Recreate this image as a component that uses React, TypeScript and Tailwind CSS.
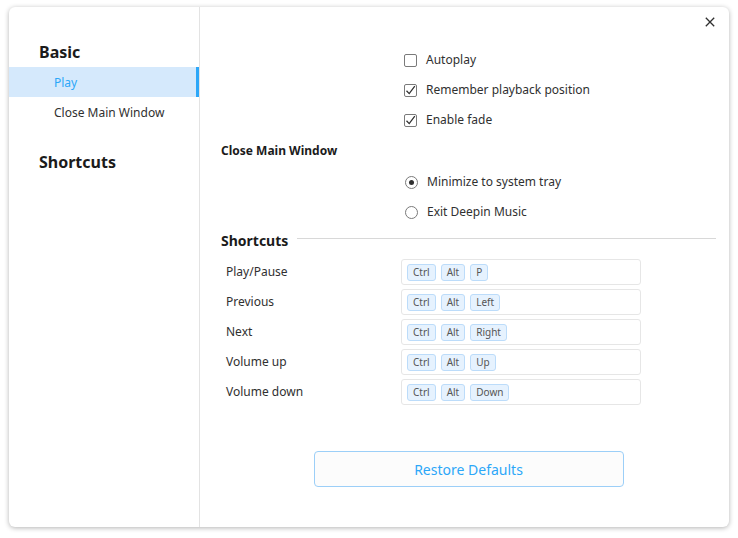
const font = { fontFamily: '"Noto Sans", "Open Sans", sans-serif' }

const shortcuts = [
  { name: "Play/Pause", keys: ["Ctrl", "Alt", "P"] },
  { name: "Previous", keys: ["Ctrl", "Alt", "Left"] },
  { name: "Next", keys: ["Ctrl", "Alt", "Right"] },
  { name: "Volume up", keys: ["Ctrl", "Alt", "Up"] },
  { name: "Volume down", keys: ["Ctrl", "Alt", "Down"] },
]

const CheckBox = ({ checked, label }: { checked: boolean; label: string }) => (
  <div className="flex items-center h-[30px]">
    <span className="w-[13px] h-[13px] rounded-[2px] border border-[#7a7a7a] flex items-center justify-center bg-white">
      {checked && (
        <svg width="11" height="11" viewBox="0 0 11 11" fill="none">
          <path d="M1.5 5.8 L4.2 8.6 L9.8 1.2" stroke="#303030" strokeWidth="1.3" />
        </svg>
      )}
    </span>
    <span className="ml-[9px] text-[12px] text-[#303030]">{label}</span>
  </div>
)

const Radio = ({ checked, label }: { checked: boolean; label: string }) => (
  <div className="flex items-center h-[30px]">
    <span className="w-[13px] h-[13px] rounded-full border border-[#7a7a7a] flex items-center justify-center bg-white">
      {checked && <span className="w-[5px] h-[5px] rounded-full bg-[#303030]" />}
    </span>
    <span className="ml-[9px] text-[12px] text-[#303030]">{label}</span>
  </div>
)

const App = () => {
  return (
    <div className="w-[738px] h-[538px] bg-white pt-[7px] pl-[9px]" style={font}>
      <div className="relative flex w-[720px] h-[520px] bg-white rounded-[6px] shadow-[0_1px_5px_rgba(0,0,0,0.3)] overflow-hidden">
        <svg className="absolute top-[10px] right-[14px]" width="10" height="10" viewBox="0 0 10 10" fill="none">
          <path d="M0.8 0.8 L9.2 9.2 M9.2 0.8 L0.8 9.2" stroke="#303030" strokeWidth="1.3" />
        </svg>

        {/* sidebar */}
        <div className="w-[191px] shrink-0 border-r border-[#e3e3e3] pt-[33px]">
          <div className="h-[24px] leading-[24px] pl-[30px] text-[16px] font-bold text-[#1b1b1b]">Basic</div>
          <div className="mt-[3px] h-[30px] flex items-center pl-[45px] pt-[2px] text-[12px] text-[#2ca7f8] bg-[#d5e9fc] border-r-[3px] border-[#2ca7f8]">
            Play
          </div>
          <div className="h-[30px] flex items-center pl-[45px] pt-[2px] text-[12px] text-[#303030]">Close Main Window</div>
          <div className="mt-[23px] h-[24px] leading-[24px] pl-[30px] text-[16px] font-bold text-[#1b1b1b]">Shortcuts</div>
        </div>

        {/* content */}
        <div className="flex-1 pl-[21px] pr-[13px] pt-[38px]">
          <div className="pl-[183px]">
            <CheckBox checked={false} label="Autoplay" />
            <CheckBox checked label="Remember playback position" />
            <CheckBox checked label="Enable fade" />
          </div>
          <div className="h-[32px] flex items-center text-[12px] font-bold text-[#1b1b1b]">Close Main Window</div>
          <div className="pl-[184px]">
            <Radio checked label="Minimize to system tray" />
            <Radio checked={false} label="Exit Deepin Music" />
          </div>
          <div className="h-[26px] flex items-center gap-[9px]">
            <span className="text-[14px] font-bold text-[#1b1b1b]">Shortcuts</span>
            <span className="flex-1 h-px bg-[#d8d8d8] -mt-[3px]" />
          </div>
          <div className="mt-[4px]">
            {shortcuts.map((s) => (
              <div key={s.name} className="flex items-center h-[30px]">
                <span className="w-[180px] pl-[5px] text-[12px] text-[#303030]">{s.name}</span>
                <div className="w-[240px] h-[26px] border border-[#e6e6e6] rounded-[3px] flex items-center gap-[5px] pl-[5px]">
                  {s.keys.map((k) => (
                    <span
                      key={k}
                      className="h-[17px] px-[5px] flex items-center rounded-[3px] border border-[#bcdcfa] bg-[#e6f2fe] text-[10px] text-[#555]"
                    >
                      {k}
                    </span>
                  ))}
                </div>
              </div>
            ))}
          </div>
          <div className="flex justify-center mt-[44px]">
            <button className="w-[310px] h-[36px] rounded-[4px] border border-[#9ccff8] bg-[#fcfcfc] text-[14px] text-[#2ca7f8]">
              Restore Defaults
            </button>
          </div>
        </div>
      </div>
    </div>
  )
}

export default App
